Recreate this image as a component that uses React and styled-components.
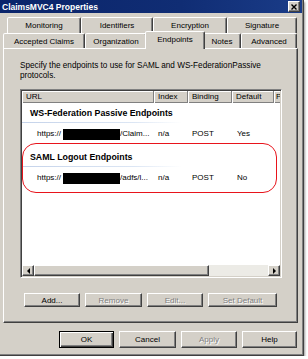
import styled, { createGlobalStyle, css } from 'styled-components'

const GlobalStyle = createGlobalStyle`
  html, body { margin: 0; padding: 0; background: #fff; }
  body { font-family: "Liberation Sans", Arial, sans-serif; font-size: 8px; color: #000; }
`

const raised = css`
  border: 1px solid;
  border-color: #fff #404040 #404040 #fff;
  box-shadow: inset -1px -1px 0 #808080;
`

const Window = styled.div`
  width: 304px;
  height: 356px;
  box-sizing: border-box;
  background: #d4d0c8;
  border-right: 1px solid #404040;
  border-bottom: 1px solid #404040;
  box-shadow: inset -1px -1px 0 #808080, 1px 2px 2px rgba(0,0,0,.4);
  display: flex;
  flex-direction: column;
`

const TitleBar = styled.div`
  height: 13px;
  flex: none;
  margin-right: 1px;
  background: linear-gradient(90deg, #0a246a, #102d74 60%, #1a3c88);
  display: flex;
  align-items: center;
  justify-content: space-between;
  padding: 0 2px 0 2px;
`

const Title = styled.span`
  color: #fff;
  font-weight: bold;
  font-size: 8.5px;
`

const CloseBtn = styled.div`
  width: 12px;
  height: 11px;
  box-sizing: border-box;
  background: #d4d0c8;
  ${raised};
  display: flex;
  align-items: center;
  justify-content: center;
`

const Content = styled.div`
  flex: 1;
  display: flex;
  flex-direction: column;
  padding: 4px 5px 0 3px;
`

const TabRow = styled.div`
  display: flex;
  height: ${p => p.$h}px;
  padding-left: ${p => p.$indent}px;
`

const Tab = styled.div`
  width: ${p => p.$w}px;
  box-sizing: border-box;
  border: 1px solid;
  border-bottom: none;
  border-color: #fff #404040 transparent #fff;
  box-shadow: inset -1px 0 0 #808080;
  border-radius: 2px 2px 0 0;
  background: #d4d0c8;
  display: flex;
  align-items: center;
  justify-content: center;
  white-space: nowrap;
  ${p => p.$active && css`
    position: relative;
    z-index: 1;
    width: ${p.$w + 4}px;
    height: 18px;
    margin: -2px -2px -1px;
    align-self: flex-start;
    padding-bottom: 2px;
  `}
`

const Panel = styled.div`
  height: 275px;
  flex: none;
  box-sizing: border-box;
  ${raised};
  display: flex;
  flex-direction: column;
  padding: 12px 0 0 16px;
`

const Description = styled.p`
  margin: 0;
  line-height: 10px;
  font-size: 8.2px;
`

const ListView = styled.div`
  width: 262px;
  height: 189px;
  margin-top: 8px;
  box-sizing: border-box;
  border: 1px solid;
  border-color: #808080 #fff #fff #808080;
  box-shadow: inset 1px 1px 0 #404040, inset -1px -1px 0 #d4d0c8;
  padding: 1px;
  background: #fff;
  display: flex;
  flex-direction: column;
`

const Header = styled.div`
  display: flex;
  height: 12px;
  flex: none;
  overflow: hidden;
`

const HeaderCell = styled.div`
  width: ${p => p.$w}px;
  flex: none;
  box-sizing: border-box;
  background: #d4d0c8;
  border-right: 1px solid #808080;
  box-shadow: inset 1px 1px 0 #fff, inset 0 -1px 0 #808080;
  padding-left: ${p => p.$pad ?? 4}px;
  line-height: 12px;
  white-space: nowrap;
  overflow: hidden;
`

const Body = styled.div`
  flex: 1;
  position: relative;
  background: #fff;
`

const Group = styled.div`
  margin-top: ${p => p.$top}px;
`

const GroupTitle = styled.div`
  height: 12px;
  line-height: 12px;
  padding-left: 8px;
  font-weight: bold;
  font-size: 8.8px;
`

const GroupLine = styled.div`
  margin-top: 3px;
  height: 1px;
  width: 160px;
  background: linear-gradient(90deg, #c5d3ea, #dce6f4 70%, #fff);
`

const Item = styled.div`
  display: flex;
  height: 12px;
  line-height: 12px;
  margin-top: 5px;
`

const Cell = styled.div`
  width: ${p => p.$w}px;
  flex: none;
  box-sizing: border-box;
  padding-left: ${p => p.$pad}px;
  display: flex;
  align-items: center;
  white-space: nowrap;
`

const Redacted = styled.span`
  display: inline-block;
  width: ${p => p.$w}px;
  height: 11px;
  background: #000;
  margin-left: 2px;
`

const Highlight = styled.div`
  position: absolute;
  left: 0;
  top: 40px;
  width: 255px;
  height: 50px;
  box-sizing: border-box;
  border: 1.5px solid #e8141c;
  border-radius: 14px;
`

const HScroll = styled.div`
  display: flex;
  height: 11px;
  flex: none;
`

const ScrollBtn = styled.div`
  width: 12px;
  flex: none;
  box-sizing: border-box;
  background: #d4d0c8;
  ${raised};
  display: flex;
  align-items: center;
  justify-content: center;
`

const Arrow = styled.span`
  width: 0;
  height: 0;
  border-top: 3px solid transparent;
  border-bottom: 3px solid transparent;
  ${p => p.$dir === 'left'
    ? css`border-right: 3px solid #000;`
    : css`border-left: 3px solid #000;`}
`

const Thumb = styled.div`
  width: ${p => p.$w}px;
  flex: none;
  box-sizing: border-box;
  background: #d4d0c8;
  ${raised};
`

const Track = styled.div`
  flex: 1;
  background: #ecebe6;
`

const ButtonRow = styled.div`
  display: flex;
  gap: ${p => p.$gap}px;
  margin: ${p => p.$margin};
  justify-content: ${p => p.$justify || 'flex-start'};
`

const PushButton = styled.div`
  width: ${p => p.$w}px;
  height: ${p => p.$h}px;
  box-sizing: border-box;
  background: #d4d0c8;
  ${raised};
  display: flex;
  align-items: center;
  justify-content: center;
  ${p => p.$disabled && css`
    color: #808080;
    text-shadow: 1px 1px 0 #fff;
  `}
  ${p => p.$default && css`
    border-color: #000;
    box-shadow: inset 1px 1px 0 #fff, inset -1px -1px 0 #404040, inset -2px -2px 0 #808080;
  `}
`

const rowTabs = [
  { label: 'Monitoring', w: 74 },
  { label: 'Identifiers', w: 72 },
  { label: 'Encryption', w: 74 },
  { label: 'Signature', w: 70 },
]

const frontTabs = [
  { label: 'Accepted Claims', w: 82 },
  { label: 'Organization', w: 62 },
  { label: 'Endpoints', w: 56, active: true },
  { label: 'Notes', w: 38 },
  { label: 'Advanced', w: 56 },
]

const columns = [
  { label: 'URL', w: 132 },
  { label: 'Index', w: 34 },
  { label: 'Binding', w: 44 },
  { label: 'Default', w: 42 },
  { label: 'P', w: 20, pad: 2 },
]

const groups = [
  { title: 'WS-Federation Passive Endpoints', top: 4, path: '/Claim...', def: 'Yes' },
  { title: 'SAML Logout Endpoints', top: 11, path: '/adfs/l...', def: 'No' },
]

export default function App() {
  return (
    <>
      <GlobalStyle />
      <Window>
        <TitleBar>
          <Title>ClaimsMVC4 Properties</Title>
          <CloseBtn>
            <svg width="6" height="6" viewBox="0 0 6 6">
              <path d="M0.5 0.5 L5.5 5.5 M5.5 0.5 L0.5 5.5" stroke="#000" strokeWidth="1.4" />
            </svg>
          </CloseBtn>
        </TitleBar>
        <Content>
          <TabRow $h={16} $indent={4}>
            {rowTabs.map(t => <Tab key={t.label} $w={t.w}>{t.label}</Tab>)}
          </TabRow>
          <TabRow $h={15} $indent={0}>
            {frontTabs.map(t => (
              <Tab key={t.label} $w={t.w} $active={t.active}>{t.label}</Tab>
            ))}
          </TabRow>
          <Panel>
            <Description>
              Specify the endpoints to use for SAML and WS-FederationPassive<br />
              protocols.
            </Description>
            <ListView>
              <Header>
                {columns.map(c => (
                  <HeaderCell key={c.label} $w={c.w} $pad={c.pad}>{c.label}</HeaderCell>
                ))}
              </Header>
              <Body>
                {groups.map(g => (
                  <Group key={g.title} $top={g.top}>
                    <GroupTitle>{g.title}</GroupTitle>
                    <GroupLine />
                    <Item>
                      <Cell $w={132} $pad={15}>https://<Redacted $w={57} />{g.path}</Cell>
                      <Cell $w={34} $pad={4}>n/a</Cell>
                      <Cell $w={44} $pad={4}>POST</Cell>
                      <Cell $w={42} $pad={5}>{g.def}</Cell>
                    </Item>
                  </Group>
                ))}
                <Highlight />
              </Body>
              <HScroll>
                <ScrollBtn><Arrow $dir="left" /></ScrollBtn>
                <Thumb $w={175} />
                <Track />
                <ScrollBtn><Arrow $dir="right" /></ScrollBtn>
              </HScroll>
            </ListView>
            <ButtonRow $gap={5} $margin="15px 0 0 4px">
              <PushButton $w={56} $h={14}>Add...</PushButton>
              <PushButton $w={57} $h={14} $disabled>Remove</PushButton>
              <PushButton $w={56} $h={14} $disabled>Edit...</PushButton>
              <PushButton $w={69} $h={14} $disabled>Set Default</PushButton>
            </ButtonRow>
          </Panel>
          <ButtonRow $gap={5} $margin="8px 1px 0 0" $justify="flex-end">
            <PushButton $w={55} $h={17} $default>OK</PushButton>
            <PushButton $w={57} $h={17}>Cancel</PushButton>
            <PushButton $w={56} $h={17} $disabled>Apply</PushButton>
            <PushButton $w={55} $h={17}>Help</PushButton>
          </ButtonRow>
        </Content>
      </Window>
    </>
  )
}
